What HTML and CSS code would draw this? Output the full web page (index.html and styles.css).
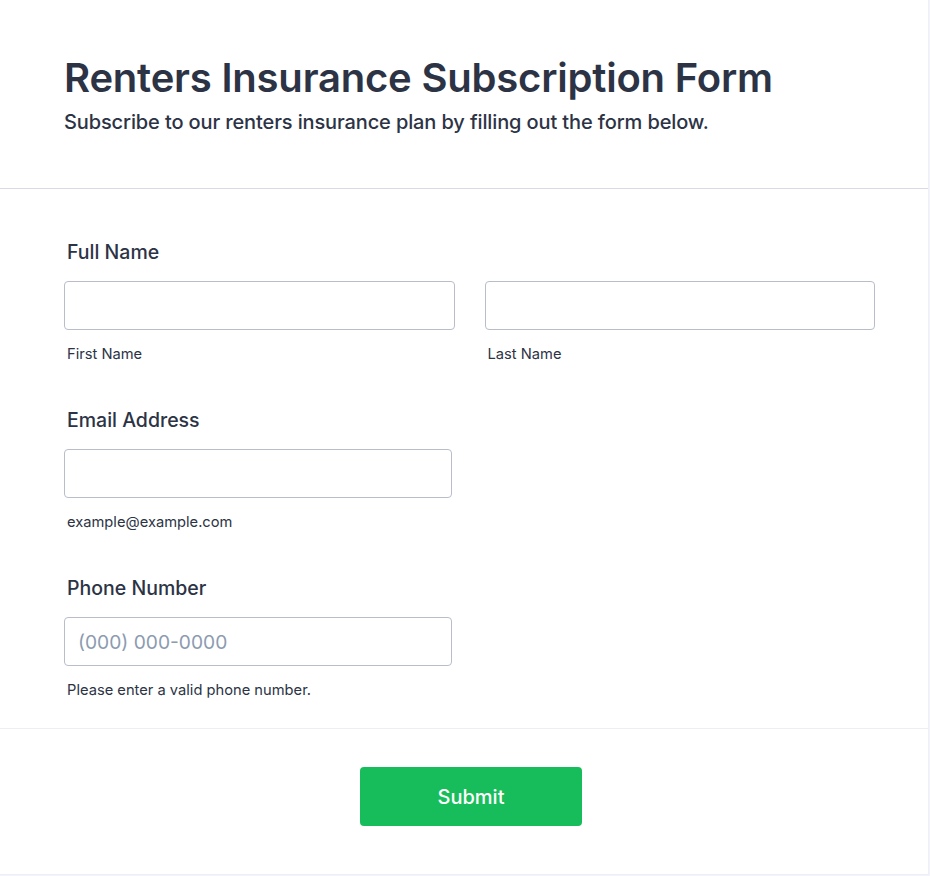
FILE: index.html
```html
<!DOCTYPE html>
<html lang="en">
<head>
<meta charset="utf-8">
<title>Renters Insurance Subscription Form</title>
<link rel="stylesheet" href="styles.css">
</head>
<body>
<form class="card">
  <header class="card-header">
    <h1 class="title">Renters Insurance Subscription Form</h1>
    <p class="subtitle">Subscribe to our renters insurance plan by filling out the form below.</p>
  </header>
  <div class="card-body">
    <div class="field">
      <label class="field-label">Full Name</label>
      <div class="name-row">
        <div class="sub">
          <input class="input" type="text">
          <span class="sublabel">First Name</span>
        </div>
        <div class="sub">
          <input class="input" type="text">
          <span class="sublabel">Last Name</span>
        </div>
      </div>
    </div>
    <div class="field">
      <label class="field-label">Email Address</label>
      <div class="sub single">
        <input class="input" type="email">
        <span class="sublabel">example@example.com</span>
      </div>
    </div>
    <div class="field">
      <label class="field-label">Phone Number</label>
      <div class="sub single">
        <input class="input" type="tel" placeholder="(000) 000-0000">
        <span class="sublabel">Please enter a valid phone number.</span>
      </div>
    </div>
  </div>
  <footer class="card-footer">
    <button class="submit" type="button">Submit</button>
  </footer>
</form>
</body>
</html>
```

FILE: styles.css
```css
* { box-sizing: border-box; }
html, body { margin: 0; padding: 0; background: #f3f3fe; }
body { font-family: Inter, "Noto Sans", sans-serif; color: #2c3345; }
.card {
  width: 929px;
  height: 875px;
  background: #fff;
  border-right: 1px solid #eff0f5;
  border-bottom: 1px solid #eff0f5;
  display: flex;
  flex-direction: column;
}
.card-header {
  padding: 54px 64px 0;
  height: 189px;
  border-bottom: 1px solid #d8dae6;
}
.title {
  margin: 0;
  font-size: 40px;
  line-height: 48px;
  font-weight: 600;
  letter-spacing: -0.2px;
}
.subtitle {
  margin: 6px 0 0;
  font-size: 20px;
  line-height: 28px;
  font-weight: 500;
  letter-spacing: -0.12px;
}
.card-body {
  padding: 50px 53px 0 64px;
  height: 540px;
  border-bottom: 1px solid #eceef3;
  display: flex;
  flex-direction: column;
  gap: 44px;
}
.field { display: flex; flex-direction: column; }
.field-label {
  font-size: 19.5px;
  line-height: 26px;
  font-weight: 500;
  padding-left: 3px;
  margin-bottom: 16px;
}
.name-row { display: flex; gap: 30px; }
.sub { display: flex; flex-direction: column; flex: 1; }
.sub.single { width: 388px; flex: none; }
.input {
  height: 49px;
  width: 100%;
  border: 1px solid #b8bdc9;
  border-radius: 4px;
  padding: 0 13px;
  font-family: inherit;
  font-size: 19.2px;
  color: #2c3345;
  background: #fff;
}
.input::placeholder { color: #8c9bb0; }
.sublabel {
  font-size: 14.7px;
  line-height: 18px;
  margin-top: 15px;
  padding-left: 3px;
  color: #2c3345;
}
.card-footer {
  display: flex;
  justify-content: center;
  padding-top: 38px;
}
.submit {
  width: 222px;
  height: 59px;
  margin-left: 14px;
  background: #18bd5b;
  color: #fff;
  border: none;
  border-radius: 4px;
  font-family: inherit;
  font-size: 20px;
  font-weight: 500;
}
```
